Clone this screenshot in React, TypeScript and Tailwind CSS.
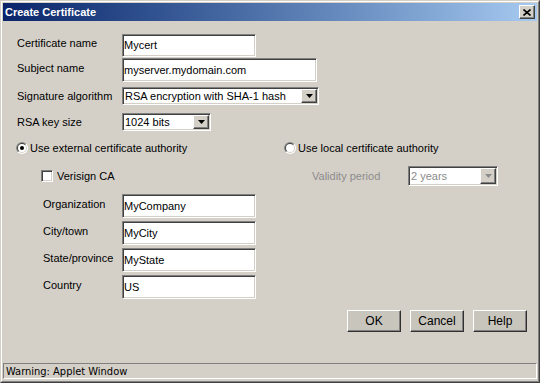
import React from "react";

const sunken =
  "border border-t-[#808080] border-l-[#808080] border-r-white border-b-white shadow-[inset_1px_1px_0_#404040,inset_-1px_-1px_0_#d4d0c8]";
const raised =
  "border border-t-white border-l-white border-r-[#404040] border-b-[#404040] shadow-[inset_-1px_-1px_0_#808080]";

function TextBox({ value, className }: { value: string; className: string }) {
  return (
    <div className={`${sunken} bg-white flex items-center pl-px text-[11px] leading-[13px] text-black ${className}`}>
      {value}
    </div>
  );
}

function DropDown({ value, className, disabled }: { value: string; className: string; disabled?: boolean }) {
  return (
    <div className={`${sunken} bg-white flex items-stretch p-px ${className}`}>
      <div className={`flex-1 flex items-center pl-px text-[11px] leading-[13px] ${disabled ? "text-[#8c8c8c]" : "text-black"}`}>
        {value}
      </div>
      <div className={`${raised} w-[16px] bg-[#d4d0c8] flex items-center justify-center`}>
        <svg width="7" height="4" viewBox="0 0 7 4">
          <path d="M0 0h7L3.5 4z" fill={disabled ? "#8c8c8c" : "#000"} />
        </svg>
      </div>
    </div>
  );
}

function Radio({ checked, id }: { checked?: boolean; id: string }) {
  return (
    <svg width="12" height="12" viewBox="0 0 12 12" className="shrink-0">
      <defs>
        <clipPath id={`tl-${id}`}>
          <polygon points="0,0 12,0 0,12" />
        </clipPath>
      </defs>
      <circle cx="6" cy="6" r="6" fill="#ffffff" />
      <circle cx="6" cy="6" r="6" fill="#808080" clipPath={`url(#tl-${id})`} />
      <circle cx="6" cy="6" r="5" fill="#d4d0c8" />
      <circle cx="6" cy="6" r="5" fill="#404040" clipPath={`url(#tl-${id})`} />
      <circle cx="6" cy="6" r="4" fill="#ffffff" />
      {checked && <circle cx="6" cy="6" r="2" fill="#000" />}
    </svg>
  );
}

function Label({ text, className, grey }: { text: string; className?: string; grey?: boolean }) {
  return (
    <div className={`text-[11px] leading-[13px] ${grey ? "text-[#8c8c8c]" : "text-black"} ${className ?? ""}`}>
      {text}
    </div>
  );
}

function PushButton({ text }: { text: string }) {
  return (
    <div className="w-[54px] h-[22px] bg-[#c8c5bd] flex items-center justify-center text-[12px] text-black border border-t-white border-l-white border-r-[#303030] border-b-[#303030] shadow-[inset_-1px_-1px_0_#808080]">
      {text}
    </div>
  );
}

export default function App() {
  const orgFields = [
    { label: "Organization", value: "MyCompany" },
    { label: "City/town", value: "MyCity" },
    { label: "State/province", value: "MyState" },
    { label: "Country", value: "US" },
  ];

  return (
    <div className="w-[540px] h-[383px] flex bg-[#d4d0c8] border border-t-[#d4d0c8] border-l-[#d4d0c8] border-r-[#404040] border-b-[#404040] font-['Liberation_Sans',Arial,sans-serif]">
      <div className="flex-1 flex flex-col p-px border border-t-white border-l-white border-r-[#808080] border-b-[#808080]">
        {/* title bar */}
        <div className="h-[18px] flex items-center justify-between bg-gradient-to-r from-[#0a246a] to-[#a6caf0] pl-[2px] pr-[2px]">
          <span className="text-white font-bold text-[11px] leading-[13px]">Create Certificate</span>
          <div className={`${raised} w-[16px] h-[14px] bg-[#d4d0c8] flex items-center justify-center`}>
            <svg width="8" height="7" viewBox="0 0 8 7">
              <path d="M0.5 0.5L7.5 6.5M7.5 0.5L0.5 6.5" stroke="#000" strokeWidth="1.6" />
            </svg>
          </div>
        </div>

        {/* body */}
        <div className="flex-1 flex flex-col pl-[14px] pt-[13px]">
          <div className="flex items-center h-[23px]">
            <Label text="Certificate name" className="w-[105px] pb-[4px]" />
            <TextBox value="Mycert" className="w-[134px] h-[23px]" />
          </div>
          <div className="flex items-center h-[24px] mt-px">
            <Label text="Subject name" className="w-[105px] pb-[3px]" />
            <TextBox value="myserver.mydomain.com" className="w-[195px] h-[24px]" />
          </div>
          <div className="flex items-center h-[18px] mt-[5px]">
            <Label text="Signature algorithm" className="w-[105px]" />
            <DropDown value="RSA encryption with SHA-1 hash" className="w-[197px] h-[18px]" />
          </div>
          <div className="flex items-center h-[18px] mt-[8px]">
            <Label text="RSA key size" className="w-[105px]" />
            <DropDown value="1024 bits" className="w-[89px] h-[18px]" />
          </div>

          <div className="flex items-center h-[14px] mt-[10px] -ml-px">
            <div className="w-[268px] flex items-center gap-[1px]">
              <Radio checked id="ext" />
              <Label text="Use external certificate authority" className="ml-[1px]" />
            </div>
            <div className="flex items-center gap-[2px]">
              <Radio id="loc" />
              <Label text="Use local certificate authority" />
            </div>
          </div>

          <div className="flex items-center h-[20px] mt-[11px]">
            <div className="w-[295px] flex items-center pl-[24px] gap-[4px]">
              <div className={`${sunken} w-[12px] h-[12px] bg-white`} />
              <Label text="Verisign CA" />
            </div>
            <Label text="Validity period" grey className="w-[96px]" />
            <DropDown value="2 years" disabled className="w-[90px] h-[20px]" />
          </div>

          <div className="flex flex-col gap-[3px] mt-[8px]">
            {orgFields.map((f) => (
              <div key={f.label} className="flex items-center h-[24px]">
                <Label text={f.label} className="w-[105px] pl-[26px] pb-[4px]" />
                <TextBox value={f.value} className="w-[134px] h-[24px]" />
              </div>
            ))}
          </div>

          <div className="flex justify-end gap-[9px] mt-[11px] mr-[10px]">
            <PushButton text="OK" />
            <PushButton text="Cancel" />
            <PushButton text="Help" />
          </div>
        </div>

        {/* status bar */}
        <div className="h-[16px] mb-px flex items-center pl-[2px] border border-t-[#808080] border-l-[#808080] border-r-white border-b-white text-[11px] leading-[13px] text-black font-['DejaVu_Sans_Condensed','Liberation_Sans',sans-serif]">
          Warning: Applet Window
        </div>
      </div>
    </div>
  );
}
